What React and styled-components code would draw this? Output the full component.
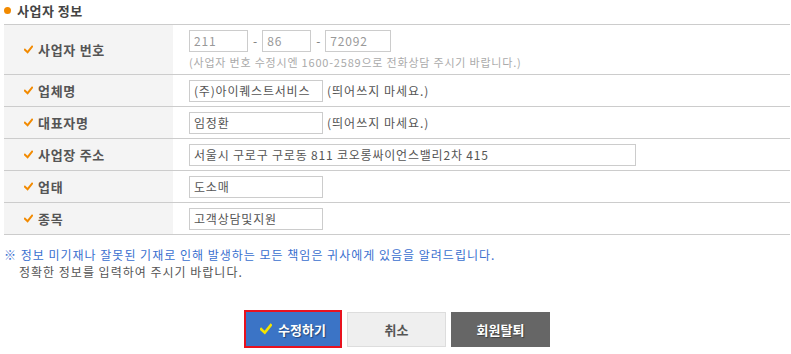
import styled, { createGlobalStyle } from "styled-components";

const GlobalStyle = createGlobalStyle`
    body {
        margin: 0;
        background: #fff;
        font-family: "Noto Sans CJK KR", "Noto Sans", sans-serif;
        font-size: 12px;
        color: #555;
    }
`

const Page = styled.div`
    width: 791px;
    padding: 0 1px 0 4px;
    box-sizing: border-box;
`

const Title = styled.h3`
    display: flex;
    align-items: center;
    gap: 6px;
    margin: 0;
    height: 24px;
    padding-bottom: 4px;
    box-sizing: border-box;
    font-size: 13px;
    font-weight: 700;
    color: #444;
    letter-spacing: 0.5px;

    &::before {
        content: "";
        width: 7px;
        height: 7px;
        border-radius: 50%;
        background: #f28a00;
    }
`

const Table = styled.div`
    border-top: 1px solid #cccccc;
`

const Row = styled.div`
    display: flex;
    height: ${p => p.$tall ? 50 : 32}px;
    border-bottom: 1px solid #cccccc;
    box-sizing: border-box;
`

const Label = styled.div`
    display: flex;
    align-items: center;
    gap: 5px;
    width: 169px;
    padding-left: 20px;
    box-sizing: border-box;
    background: #f4f4f4;
    font-size: 13px;
    font-weight: 700;
    color: #555;
    letter-spacing: 0.7px;
`

const Value = styled.div`
    display: flex;
    flex-direction: column;
    justify-content: center;
    gap: 2px;
    padding-left: 16px;
`

const Line = styled.div`
    display: flex;
    align-items: center;
    gap: 4px;
`

const Input = styled.input`
    width: ${p => p.$w}px;
    height: 22px;
    padding: 0 4px;
    box-sizing: border-box;
    border: 1px solid #cccccc;
    font-family: inherit;
    font-size: 12px;
    letter-spacing: 0.8px;
    color: ${p => p.$dim ? "#999" : "#555"};
    background: #fff;
    outline: none;
`

const Dash = styled.span`
    color: #777;
    padding: 0 1px;
`

const Hint = styled.span`
    color: ${p => p.$light ? "#aaa" : "#555"};
    font-size: ${p => p.$light ? 11 : 12}px;
    letter-spacing: ${p => p.$light ? 0.8 : 1}px;
`

const Notice = styled.div`
    margin-top: 11px;
    line-height: 17px;
    font-size: 12px;
    letter-spacing: 1px;

    p {
        margin: 0;
        color: #3a6fcf;
    }

    p + p {
        color: #555;
        padding-left: 15px;
    }
`

const Buttons = styled.div`
    display: flex;
    justify-content: center;
    align-items: center;
    gap: 5px;
    margin-top: 30px;
`

const Button = styled.button`
    display: flex;
    align-items: center;
    justify-content: center;
    gap: 6px;
    width: ${p => p.$primary ? 98 : 99}px;
    height: ${p => p.$primary ? 38 : 35}px;
    box-sizing: border-box;
    font-family: inherit;
    font-size: 13px;
    font-weight: 700;
    cursor: pointer;
    border: ${p => p.$primary ? "2px solid #e8121e" : p.$light ? "1px solid #dddddd" : "none"};
    background: ${p => p.$primary ? "#3b74c6" : p.$light ? "#efefef" : "#666666"};
    color: ${p => p.$light ? "#555" : "#fff"};
    text-shadow: ${p => p.$light ? "none" : "1px 1px 1px rgba(0,0,0,0.4)"};
`

const Check = ({ color = "#f28a00", size = 9 }) => (
    <svg width={size} height={size} viewBox="0 0 10 10">
        <path d="M1 5.2 L4 8 L9 1.8" fill="none" stroke={color} strokeWidth="2.2" strokeLinecap="square" />
    </svg>
)

const rows = [
    { label: "업체명", value: "(주)아이퀘스트서비스", w: 134, hint: "(띄어쓰지 마세요.)" },
    { label: "대표자명", value: "임정환", w: 134, hint: "(띄어쓰지 마세요.)" },
    { label: "사업장 주소", value: "서울시 구로구 구로동 811 코오롱싸이언스밸리2차 415", w: 447 },
    { label: "업태", value: "도소매", w: 134 },
    { label: "종목", value: "고객상담및지원", w: 134 },
]

const App = () => {
    return (
        <Page>
            <GlobalStyle />
            <Title>사업자 정보</Title>
            <Table>
                <Row $tall>
                    <Label><Check />사업자 번호</Label>
                    <Value>
                        <Line>
                            <Input $w={59} $dim defaultValue="211" />
                            <Dash>-</Dash>
                            <Input $w={49} $dim defaultValue="86" />
                            <Dash>-</Dash>
                            <Input $w={66} $dim defaultValue="72092" />
                        </Line>
                        <Hint $light>(사업자 번호 수정시엔 1600-2589으로 전화상담 주시기 바랍니다.)</Hint>
                    </Value>
                </Row>
                {rows.map(r => (
                    <Row key={r.label}>
                        <Label><Check />{r.label}</Label>
                        <Value>
                            <Line>
                                <Input $w={r.w} defaultValue={r.value} />
                                {r.hint && <Hint>{r.hint}</Hint>}
                            </Line>
                        </Value>
                    </Row>
                ))}
            </Table>
            <Notice>
                <p>※ 정보 미기재나 잘못된 기재로 인해 발생하는 모든 책임은 귀사에게 있음을 알려드립니다.</p>
                <p>정확한 정보를 입력하여 주시기 바랍니다.</p>
            </Notice>
            <Buttons>
                <Button $primary><Check color="#f5e400" size={12} />수정하기</Button>
                <Button $light>취소</Button>
                <Button>회원탈퇴</Button>
            </Buttons>
        </Page>
    )
}

export default App;
